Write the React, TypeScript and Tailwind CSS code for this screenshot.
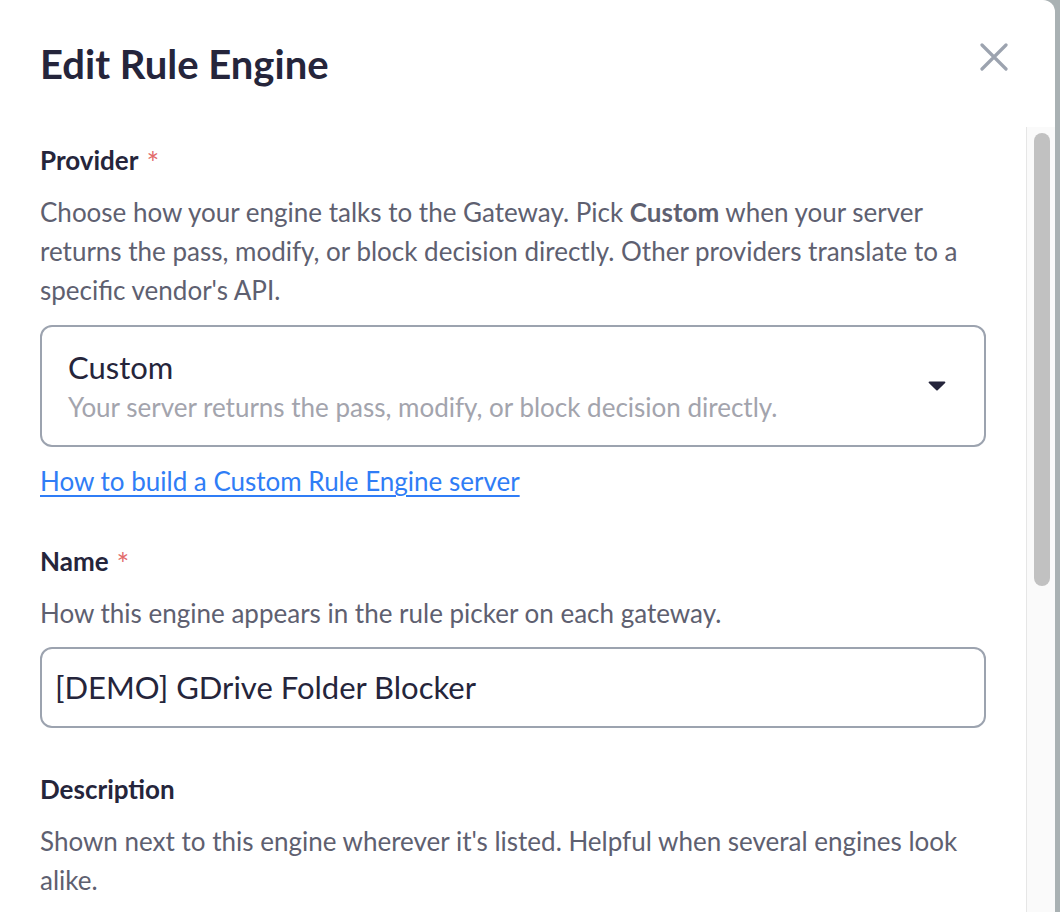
const Label = ({ text, required }: { text: string; required?: boolean }) => (
  <div className="h-[36px] text-[26px] font-bold leading-[36px] text-[#25253b]">
    {text}
    {required && <span className="ml-[8px] align-[-4px] text-[30px] font-normal leading-none text-[#e26a6a]">*</span>}
  </div>
);

const Help = ({ children }: { children: React.ReactNode }) => (
  <p className="mt-[15px] text-[26px] leading-[39px] text-[#5e6070]">{children}</p>
);

export default function App() {
  return (
    <div
      className="flex h-[912px] w-[1060px] overflow-hidden bg-[#a9b1b3]"
      style={{ fontFamily: "Lato, 'Noto Sans', sans-serif" }}
    >
      <div className="flex h-full w-[1055px] flex-col rounded-tr-[12px] bg-white">
        {/* Header */}
        <div className="flex h-[127px] shrink-0 items-start justify-between pl-10 pr-[47px] pt-[40px]">
          <h1 className="text-[40px] font-bold leading-[48px] text-[#25253b]">Edit Rule Engine</h1>
          <button className="mt-[3px] text-[#9ca3af]" aria-label="Close">
            <svg width="28" height="28" viewBox="0 0 28 28" fill="none">
              <path d="M2 2L26 26M26 2L2 26" stroke="currentColor" strokeWidth="3.2" strokeLinecap="round" />
            </svg>
          </button>
        </div>

        {/* Body */}
        <div className="flex min-h-0 flex-1">
          <div className="flex-1 overflow-hidden px-10 pt-[15px]">
            <Label text="Provider" required />
            <Help>
              Choose how your engine talks to the Gateway. Pick <b className="font-bold">Custom</b> when your server
              returns the pass, modify, or block decision directly. Other providers translate to a specific
              vendor's API.
            </Help>

            <div className="mt-[15px] flex h-[122px] items-center justify-between rounded-[12px] border-2 border-[#9ca3af] pl-[26px] pr-[38px]">
              <div>
                <div className="text-[31px] leading-[40px] text-[#25253b]">Custom</div>
                <div className="mt-[2px] text-[26px] leading-[36px] text-[#a3a4ad]">
                  Your server returns the pass, modify, or block decision directly.
                </div>
              </div>
              <svg width="18" height="10" viewBox="0 0 18 10" className="text-[#25253b]">
                <path d="M1.5 0.5H16.5C17.3 0.5 17.7 1.4 17.1 2L9.7 9.2C9.3 9.6 8.7 9.6 8.3 9.2L0.9 2C0.3 1.4 0.7 0.5 1.5 0.5Z" fill="currentColor" />
              </svg>
            </div>

            <a href="#" className="mt-[16px] block w-fit text-[26px] leading-[36px] text-[#2f7df6] underline underline-offset-[4px]">
              How to build a Custom Rule Engine server
            </a>

            <div className="mt-[44px]">
              <Label text="Name" required />
              <Help>How this engine appears in the rule picker on each gateway.</Help>
              <div className="mt-[14px] flex h-[81px] items-center rounded-[12px] border-2 border-[#9ca3af] pl-[13px] text-[31px] text-[#25253b]">
                [DEMO] GDrive Folder Blocker
              </div>
            </div>

            <div className="mt-[43px]">
              <Label text="Description" />
              <Help>
                Shown next to this engine wherever it's listed. Helpful when several engines look alike.
              </Help>
            </div>
          </div>

          {/* Scrollbar */}
          <div className="w-[29px] shrink-0 border-l border-[#e6e6e6] bg-[#fafafa] pl-[7px] pt-[6px]">
            <div className="h-[453px] w-[16px] rounded-full bg-[#c1c1c1]" />
          </div>
        </div>
      </div>
    </div>
  );
}
